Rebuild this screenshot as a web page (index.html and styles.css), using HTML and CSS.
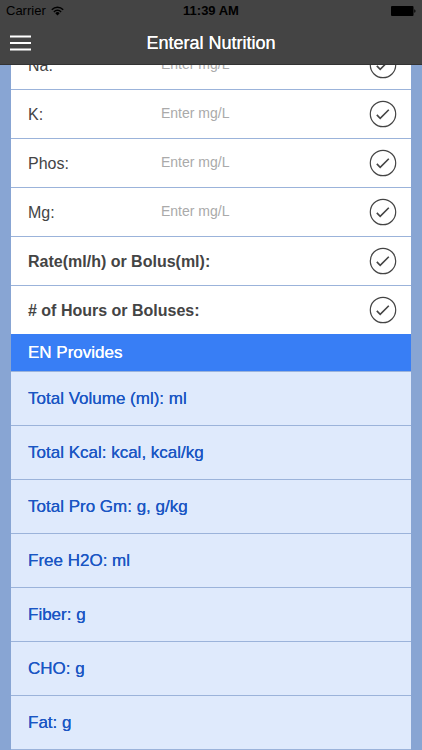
FILE: index.html
```html
<!DOCTYPE html>
<html lang="en">
  <head>
    <meta charset="utf-8">
    <meta name="viewport" content="width=device-width, initial-scale=1">
    <title>Enteral Nutrition</title>
    <link rel="stylesheet" href="styles.css">
  </head>
  <body>
    <svg class="symbols" width="0" height="0" aria-hidden="true">
      <symbol id="check" viewBox="0 0 28 28">
        <circle cx="14" cy="14" r="12.7" stroke-width="1.2" />
        <path d="M7.8 14.9l3.4 3.4 8.6-8.6" stroke-width="1.6" />
      </symbol>
    </svg>

    <header class="header">
      <div class="status-bar">
        <div class="carrier">
          <span>Carrier</span>
          <svg width="13" height="10" viewBox="0 0 13 10" aria-hidden="true">
            <path d="M.8 3.7a8 8 0 0 1 11.4 0M2.9 5.9a5 5 0 0 1 7.2 0" fill="none" stroke="#000" stroke-width="1.5" />
            <path d="M4.3 7.3a3 3 0 0 1 4.4 0L6.5 9.6z" />
          </svg>
        </div>
        <time class="clock">11:39 AM</time>
        <div class="battery">
          <svg width="25" height="10" viewBox="0 0 25 10" aria-hidden="true">
            <rect width="22.5" height="10" rx="1" />
            <path d="M23.3 3.2c1.6.4 1.6 3.2 0 3.6z" />
          </svg>
        </div>
      </div>
      <div class="nav-bar">
        <button class="menu" type="button" aria-label="Menu">
          <svg width="21" height="16" viewBox="0 0 21 16" aria-hidden="true">
            <path d="M0 1.5h21M0 8h21M0 14.5h21" stroke="#fff" stroke-width="2.2" />
          </svg>
        </button>
        <h1 class="title">Enteral Nutrition</h1>
      </div>
    </header>

    <main class="page">
      <form class="inputs">
        <div class="row">
          <label for="na">Na:</label>
          <input type="text" id="na" placeholder="Enter mg/L">
          <button class="done" type="button" aria-label="Done"><svg><use href="#check" /></svg></button>
        </div>
        <div class="row">
          <label for="k">K:</label>
          <input type="text" id="k" placeholder="Enter mg/L">
          <button class="done" type="button" aria-label="Done"><svg><use href="#check" /></svg></button>
        </div>
        <div class="row">
          <label for="phos">Phos:</label>
          <input type="text" id="phos" placeholder="Enter mg/L">
          <button class="done" type="button" aria-label="Done"><svg><use href="#check" /></svg></button>
        </div>
        <div class="row">
          <label for="mg">Mg:</label>
          <input type="text" id="mg" placeholder="Enter mg/L">
          <button class="done" type="button" aria-label="Done"><svg><use href="#check" /></svg></button>
        </div>
        <div class="row strong">
          <label for="rate">Rate(ml/h) or Bolus(ml):</label>
          <input type="text" id="rate">
          <button class="done" type="button" aria-label="Done"><svg><use href="#check" /></svg></button>
        </div>
        <div class="row strong">
          <label for="hours"># of Hours or Boluses:</label>
          <input type="text" id="hours">
          <button class="done" type="button" aria-label="Done"><svg><use href="#check" /></svg></button>
        </div>
      </form>

      <h2 class="divider">EN Provides</h2>
      <ul class="results">
        <li>Total Volume (ml): ml</li>
        <li>Total Kcal: kcal, kcal/kg</li>
        <li>Total Pro Gm: g, g/kg</li>
        <li>Free H2O: ml</li>
        <li>Fiber: g</li>
        <li>CHO: g</li>
        <li>Fat: g</li>
      </ul>
    </main>
  </body>
</html>
```
FILE: styles.css
```css
* {
  box-sizing: border-box;
}
body {
  margin: 0;
  background-color: #88a5d3;
  color: #444;
  font-family: "Liberation Sans", Arial, Helvetica, sans-serif;
  font-size: 16px;
  line-height: 20px;
}
button {
  padding: 0;
  border: 0;
  background: none;
  cursor: pointer;
}
svg {
  display: block;
}
.symbols {
  position: absolute;
}

/* header */
.header {
  position: fixed;
  top: 0;
  left: 0;
  right: 0;
  z-index: 1;
  background-color: #444;
  border-bottom: 1px solid #333;
}
.status-bar {
  display: flex;
  align-items: center;
  height: 22px;
  padding: 0 6px;
  color: #000;
  font-size: 13px;
}
.carrier,
.battery {
  display: flex;
  flex: 1;
  align-items: center;
  gap: 5px;
}
.battery {
  justify-content: flex-end;
}
.clock {
  font-weight: bold;
}
.nav-bar {
  display: grid;
  grid-template-columns: 21px 1fr 21px;
  align-items: center;
  height: 42px;
  padding: 0 10px;
}
.title {
  margin: 0;
  color: #fff;
  font-size: 18px;
  font-weight: normal;
  text-align: center;
  text-shadow: 0 0 0 #fff;
}

/* input rows */
.page {
  margin: 0 11px;
  padding-top: 40px;
}
.row {
  display: flex;
  align-items: center;
  height: 49px;
  padding: 0 14px 0 17px;
  background-color: #fff;
  border-top: 1px solid #9bb3da;
}
.row label {
  width: 133px;
  padding-top: 1px;
}
.row input {
  flex: 1;
  min-width: 0;
  padding: 0 0 3px;
  border: 0;
  outline: none;
  background: none;
  color: #444;
  font: inherit;
  font-size: 14px;
}
.row input::placeholder {
  color: #aaa;
}
.strong label {
  width: auto;
  font-weight: bold;
}
.done svg {
  width: 28px;
  height: 28px;
  fill: none;
  stroke: #444;
}

/* results */
.divider {
  margin: 0;
  padding: 9px 17px 8px;
  background-color: #387ef5;
  border-bottom: 1px solid #9bb3da;
  color: #fff;
  font-size: 17px;
  font-weight: normal;
  text-shadow: 0 0 0 #fff;
}
.results {
  margin: 0;
  padding: 0;
  list-style: none;
}
.results li {
  padding: 17px 17px 16px;
  background-color: #dfeafc;
  border-bottom: 1px solid #9bb3da;
  color: #1a56c4;
  font-size: 17px;
  text-shadow: 0 0 0 #1a56c4;
}
```
